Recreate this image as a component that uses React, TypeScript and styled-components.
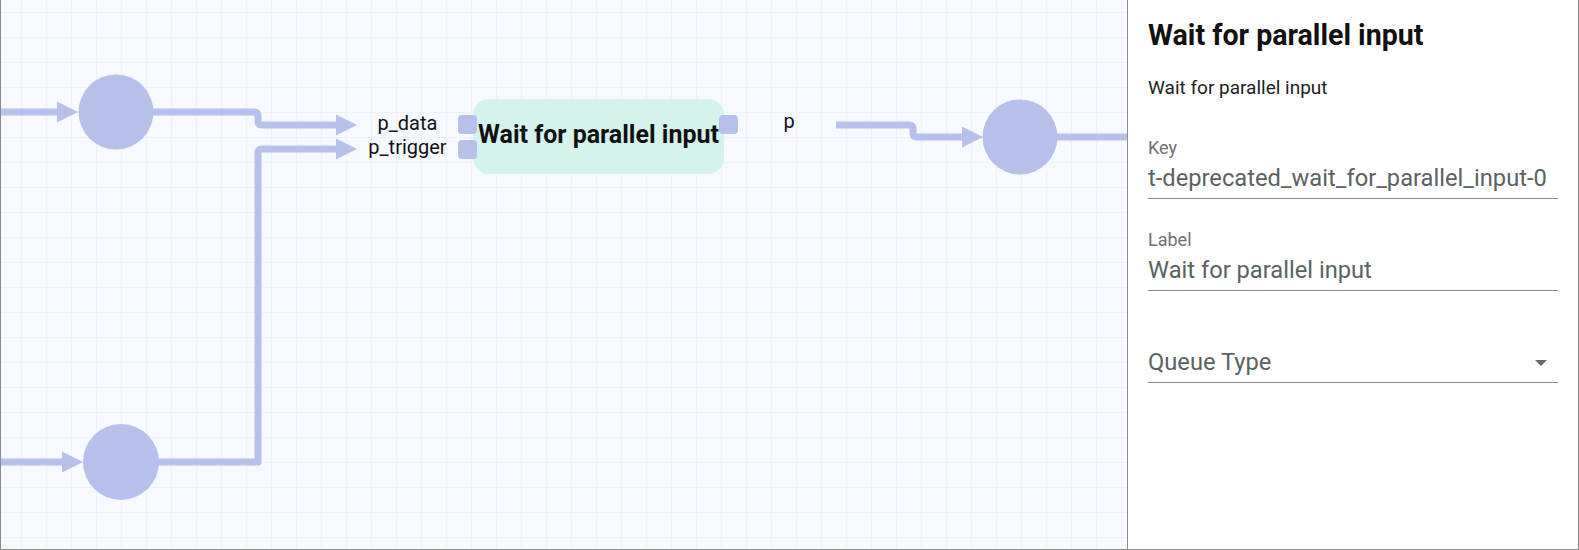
import React from "react";
import styled, { createGlobalStyle } from "styled-components";

const GlobalStyle = createGlobalStyle`
  html, body {
    margin: 0;
    padding: 0;
    background: #ffffff;
    font-family: Roboto, "Noto Sans", "Liberation Sans", sans-serif;
  }
  * { box-sizing: border-box; }
`;

const EDGE = "#b7c0eb";

const Frame = styled.div`
  display: flex;
  width: 1579px;
  height: 550px;
  border-left: 1px solid #8c8c8c;
  border-right: 1px solid #8c8c8c;
  border-bottom: 1px solid #8c8c8c;
  overflow: hidden;
`;

const Canvas = styled.div`
  position: relative;
  flex: 1;
  overflow: hidden;
  background-color: #f6f9fd;
  background-image: linear-gradient(to right, #eef1f5 1px, transparent 1px),
    linear-gradient(to bottom, #eef1f5 1px, transparent 1px);
  background-size: 25px 25px;
  background-position: 20px 12px;
`;

const EdgeLayer = styled.svg`
  display: block;
  width: 100%;
  height: 100%;
`;

const TaskNode = styled.div<{ $x: number; $y: number; $w: number; $h: number }>`
  position: absolute;
  left: ${(p) => p.$x - 1}px;
  top: ${(p) => p.$y}px;
  width: ${(p) => p.$w}px;
  height: ${(p) => p.$h}px;
  display: flex;
  align-items: center;
  justify-content: center;
  padding-bottom: 4px;
  border-radius: 16px;
  background: #d3f3ec;
  color: #111111;
  font-size: 25px;
  font-weight: 700;
  white-space: nowrap;
`;

const Port = styled.div<{ $x: number; $y: number }>`
  position: absolute;
  left: ${(p) => p.$x - 1}px;
  top: ${(p) => p.$y}px;
  width: 19px;
  height: 19px;
  border-radius: 4px;
  background: ${EDGE};
`;

const PortLabel = styled.div<{ $cx: number; $y: number }>`
  position: absolute;
  left: ${(p) => p.$cx - 1 - 60}px;
  top: ${(p) => p.$y}px;
  width: 120px;
  text-align: center;
  font-size: 20px;
  line-height: 24px;
  color: #111111;
`;

const Panel = styled.aside`
  width: 451px;
  flex-shrink: 0;
  border-left: 1px solid #8c8c8c;
  background: #ffffff;
  padding: 18px 20px;
  display: flex;
  flex-direction: column;
`;

const Title = styled.h2`
  margin: 0;
  font-size: 28.6px;
  line-height: 34px;
  font-weight: 700;
  color: #111111;
`;

const Subtitle = styled.p`
  margin: 24px 0 0;
  font-size: 19px;
  line-height: 24px;
  color: #222222;
`;

const Fields = styled.div`
  margin-top: 37px;
  display: flex;
  flex-direction: column;
  gap: 30px;
`;

const Field = styled.div`
  display: flex;
  flex-direction: column;
`;

const FieldLabel = styled.div`
  min-height: 21px;
  font-size: 18px;
  line-height: 21px;
  color: #6d7171;
`;

const ValueRow = styled.div`
  margin-top: 6px;
  display: flex;
  align-items: center;
  justify-content: space-between;
  padding-bottom: 6px;
  border-bottom: 1px solid #858a8a;
  font-size: 23.7px;
  line-height: 28px;
  color: #5b6262;
  white-space: nowrap;
`;

const DropIcon = styled.svg`
  width: 24px;
  height: 24px;
  margin-right: 5px;
  flex-shrink: 0;
`;

const Arrow = ({ tip, y }: { tip: number; y: number }) => (
  <polygon points={`${tip - 21},${y - 10.5} ${tip},${y} ${tip - 21},${y + 10.5}`} fill={EDGE} />
);

export default function App() {
  return (
    <>
      <GlobalStyle />
      <Frame>
        <Canvas>
          <EdgeLayer viewBox="0 0 1126 549">
            <g transform="translate(-1,0)" fill="none" stroke={EDGE} strokeWidth={7} strokeLinejoin="round">
              <path d="M0,112 H60" />
              <path d="M116,112 H254 Q258,112 258,116 V121 Q258,125 262,125 H338" />
              <path d="M0,462 H64" />
              <path d="M121,462 H258 V153 Q258,149 262,149 H338" />
              <path d="M836,125 H909 Q913,125 913,129 V133 Q913,137 917,137 H964" />
              <path d="M1020,137 H1130" />
            </g>
            <g transform="translate(-1,0)">
              <Arrow tip={78} y={112} />
              <Arrow tip={357} y={125} />
              <Arrow tip={83} y={462} />
              <Arrow tip={357} y={149} />
              <Arrow tip={983} y={137} />
              <circle cx={116} cy={112} r={37.5} fill={EDGE} />
              <circle cx={121} cy={462} r={38} fill={EDGE} />
              <circle cx={1020} cy={137} r={37.5} fill={EDGE} />
            </g>
          </EdgeLayer>
          <PortLabel $cx={407.5} $y={111}>p_data</PortLabel>
          <PortLabel $cx={407.5} $y={135}>p_trigger</PortLabel>
          <PortLabel $cx={789} $y={109}>p</PortLabel>
          <TaskNode $x={473} $y={99} $w={251} $h={75}>Wait for parallel input</TaskNode>
          <Port $x={458} $y={115} />
          <Port $x={458} $y={140} />
          <Port $x={719} $y={115} />
        </Canvas>
        <Panel>
          <Title>Wait for parallel input</Title>
          <Subtitle>Wait for parallel input</Subtitle>
          <Fields>
            <Field>
              <FieldLabel>Key</FieldLabel>
              <ValueRow>t-deprecated_wait_for_parallel_input-0</ValueRow>
            </Field>
            <Field>
              <FieldLabel>Label</FieldLabel>
              <ValueRow>Wait for parallel input</ValueRow>
            </Field>
            <Field>
              <FieldLabel />
              <ValueRow>
                <span>Queue Type</span>
                <DropIcon viewBox="0 0 24 24">
                  <path d="M6 10l6 6 6-6z" fill="#666a6a" />
                </DropIcon>
              </ValueRow>
            </Field>
          </Fields>
        </Panel>
      </Frame>
    </>
  );
}
